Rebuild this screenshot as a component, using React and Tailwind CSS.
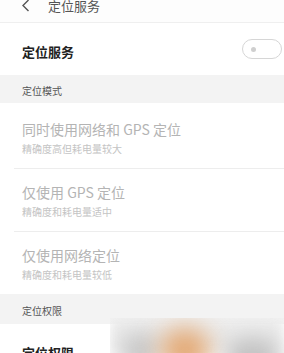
import React from "react";

const font = { fontFamily: '"Noto Sans CJK SC", "Noto Sans", sans-serif' };

function Item({ title, sub, first, last }) {
  return (
    <div className="bg-white">
      <div className={`px-[22px] ${first ? "pt-[16px]" : "pt-[13px]"} pb-[12px]`}>
        <div className="text-[14px] leading-[20px] text-[#b4b4b4]">{title}</div>
        <div className="mt-[3px] text-[10px] leading-[14px] text-[#c4c4c4]">{sub}</div>
      </div>
      {!last && <div className="ml-[14px] h-px bg-[#ededed]" />}
    </div>
  );
}

export default function App() {
  return (
    <div className="relative w-[284px] h-[353px] overflow-hidden bg-white" style={font}>
      <div className="h-[23px] border-b border-[#efefef] bg-[#fdfdfd]">
        <div className="flex items-center h-[11px] pl-[21px]">
          <svg width="9" height="13" viewBox="0 0 9 13">
            <polyline points="7.5,1 2,6.5 7.5,12" fill="none" stroke="#555" strokeWidth="1.4" />
          </svg>
          <span className="ml-[18px] text-[13px] leading-[18px] text-[#555]">定位服务</span>
        </div>
      </div>
      <div className="flex items-center justify-between h-[52px] pl-[22px] pr-[2px]">
        <span className="text-[13px] leading-[18px] font-bold text-[#222] mt-[5px]">定位服务</span>
        <div className="flex items-center w-[40px] h-[20px] rounded-full border border-[#d6d6d6] pl-[8px]">
          <div className="w-[5px] h-[5px] rounded-full bg-[#cfcfcf]" />
        </div>
      </div>
      <div className="h-[28px] bg-[#f3f3f3] pl-[22px] pt-[9px] text-[10px] leading-[14px] text-[#555]">定位模式</div>
      <Item first title="同时使用网络和 GPS 定位" sub="精确度高但耗电量较大" />
      <Item title="仅使用 GPS 定位" sub="精确度和耗电量适中" />
      <Item last title="仅使用网络定位" sub="精确度和耗电量较低" />
      <div className="h-[30px] bg-[#f3f3f3] pl-[22px] pt-[10px] text-[10px] leading-[14px] text-[#555]">定位权限</div>
      <div className="bg-white pl-[22px] pt-[20px] text-[13px] leading-[18px] font-bold text-[#222]">定位权限</div>
      <div className="absolute left-[110px] top-[318px] right-0 bottom-0 overflow-hidden">
        <div className="absolute inset-0 bg-[#ebebeb] blur-[6px]" />
        <div className="absolute left-[10px] top-[14px] w-[40px] h-[40px] rounded-full bg-[#c9c9c9] blur-[10px]" />
        <div className="absolute left-[50px] top-[10px] w-[50px] h-[45px] rounded-full bg-[#e3a873] blur-[12px]" />
        <div className="absolute left-[115px] top-[20px] w-[55px] h-[40px] rounded-full bg-[#c2c2c2] blur-[10px]" />
      </div>
    </div>
  );
}
